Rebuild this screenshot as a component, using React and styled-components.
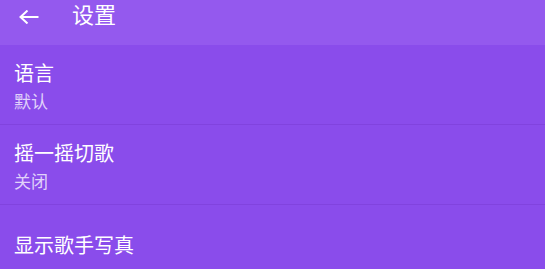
import React from "react";
import styled, { createGlobalStyle } from "styled-components";

const Global = createGlobalStyle`
  html, body { margin: 0; padding: 0; }
  body {
    background: #8a4ceb;
    font-family: "Noto Sans CJK SC", "Noto Sans", sans-serif;
    overflow: hidden;
  }
`;

const Page = styled.div`
  width: 545px;
  height: 269px;
  background: #8a4ceb;
  display: flex;
  flex-direction: column;
  overflow: hidden;
`;

const Header = styled.header`
  height: 45px;
  flex: 0 0 45px;
  background: #9459ee;
  display: flex;
  align-items: flex-start;
  box-sizing: border-box;
  padding: 0 0 0 19px;
`;

const BackButton = styled.div`
  width: 20px;
  height: 14px;
  margin-top: 10px;
  display: flex;
`;

const Title = styled.h1`
  margin: 2px 0 0 33px;
  font-size: 22px;
  line-height: 22px;
  font-weight: 400;
  color: #ffffff;
`;

const List = styled.div`
  display: flex;
  flex-direction: column;
  flex: 0 0 auto;
`;

const Row = styled.div`
  height: 80px;
  flex: 0 0 80px;
  box-sizing: border-box;
  padding: 0 14px;
  display: flex;
  flex-direction: column;
  justify-content: ${(p) => (p.$single ? "center" : "flex-start")};
  padding-top: ${(p) => (p.$single ? "0" : "16px")};
  border-bottom: ${(p) => (p.$last ? "none" : "1px solid #8143de")};
`;

const RowTitle = styled.div`
  font-size: 20px;
  line-height: 24px;
  color: #ffffff;
`;

const RowSub = styled.div`
  font-size: 17px;
  line-height: 22px;
  margin-top: 5px;
  color: rgba(255, 255, 255, 0.75);
`;

const items = [
  { title: "语言", sub: "默认" },
  { title: "摇一摇切歌", sub: "关闭" },
  { title: "显示歌手写真" },
];

export default function App() {
  return (
    <>
      <Global />
      <Page>
        <Header>
          <BackButton>
            <svg width="20" height="14" viewBox="0 0 20 14" fill="none">
              <path
                d="M19.5 7H1.5M8.5 0.5L1.5 7l7 6.5"
                stroke="#fff"
                strokeWidth="2"
              />
            </svg>
          </BackButton>
          <Title>设置</Title>
        </Header>
        <List>
          {items.map((it, i) => (
            <Row key={i} $single={!it.sub} $last={i === items.length - 1}>
              <RowTitle>{it.title}</RowTitle>
              {it.sub && <RowSub>{it.sub}</RowSub>}
            </Row>
          ))}
        </List>
      </Page>
    </>
  );
}
